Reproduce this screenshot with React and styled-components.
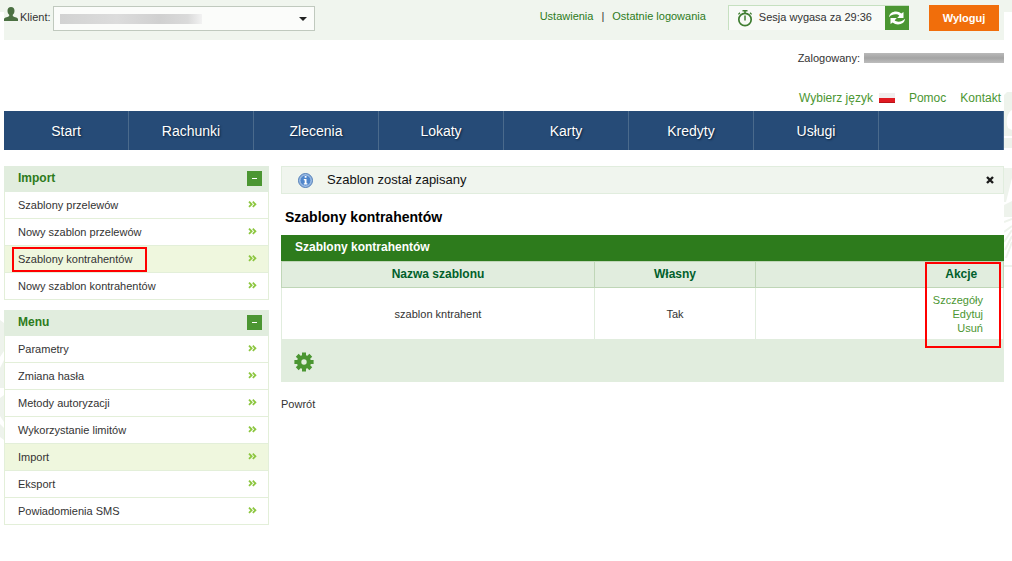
import React from 'react';
import styled, { createGlobalStyle } from 'styled-components';

const colors = {
    text: '#333333',
    link: '#4b9632',
    linkDark: '#2d7b1c',
    heading: '#00602b',
    pale: '#f0f5ee',
    panel: '#e1edde',
    line: '#e3efd9',
    lineDark: '#bfd6b7',
    active: '#eff7de',
    navy: '#264b77',
    orange: '#f16e0b',
    mark: '#ff0000',
};

const GlobalStyle = createGlobalStyle`
    *, *::before, *::after {
        box-sizing: border-box;
    }

    body {
        margin: 0;
        background: linear-gradient(${colors.pale} 12px, #ffffff 12px);
        color: ${colors.text};
        font: 11px/14px "Liberation Sans", Arial, sans-serif;
    }

    button, select {
        font: inherit;
        color: inherit;
    }

    a {
        color: inherit;
        text-decoration: none;
    }

    a:hover {
        text-decoration: underline;
    }
`;

const Page = styled.div`
    position: relative;
    padding: 0 8px 32px 4px;
`;

const Backdrop = styled.svg`
    position: absolute;
    z-index: -1;
    top: ${({ $top }) => $top}px;
    left: ${({ $side }) => ($side === 'left' ? '0' : 'auto')};
    right: ${({ $side }) => ($side === 'right' ? '0' : 'auto')};
`;

const TopBar = styled.header`
    display: flex;
    align-items: flex-start;
    height: 40px;
    padding: 5px 5px 0 0;
    background-color: ${colors.pale};
`;

const Client = styled.div`
    display: flex;
    align-items: flex-start;
    margin-right: auto;

    > svg {
        margin: 2px 2px 0 0;
    }

    label {
        margin: 5px 2px 0 0;
    }
`;

const SelectBox = styled.div`
    position: relative;
    width: 262px;
    margin-top: 1px;

    select {
        display: block;
        width: 100%;
        height: 25px;
        padding: 0 24px 0 8px;
        appearance: none;
        background-color: #fbfcfa;
        border: 1px solid #c0c9be;
        border-radius: 0;
    }

    svg {
        position: absolute;
        top: 11px;
        right: 8px;
        pointer-events: none;
    }
`;

const Redacted = styled.span`
    display: block;
    width: ${({ $width }) => $width}px;
    height: ${({ $height }) => $height}px;
    background: ${({ $dark }) =>
        $dark
            ? 'linear-gradient(#b9b9b9, #a4a4a4 50%, #bdbdbd)'
            : 'linear-gradient(90deg, #d2d2d2 0, #dcdcdc 40%, #d0d0d0 70%, #dadada 90%, #f2f2f2)'};
`;

const SelectedValue = styled(Redacted)`
    position: absolute;
    top: 8px;
    left: 7px;
    pointer-events: none;
`;

const TopLinks = styled.nav`
    display: flex;
    gap: 8px;
    margin: 4px 22px 0 0;

    a {
        color: ${colors.linkDark};
    }
`;

const Session = styled.div`
    display: flex;
    align-items: center;
    height: 25px;
    margin-right: 20px;
    padding-left: 8px;
    background-color: #f8faf7;
    border-top: 1px solid #c6e0c0;
    border-left: 1px solid #c6e0c0;

    > span {
        margin: 0 13px 2px 6px;
    }
`;

const RefreshButton = styled.button`
    display: flex;
    align-items: center;
    justify-content: center;
    width: 24px;
    height: 24px;
    padding: 0;
    background-color: ${colors.link};
    border: none;
    cursor: pointer;
`;

const LogoutButton = styled.button`
    width: 70px;
    height: 26px;
    padding: 0;
    background-color: ${colors.orange};
    border: none;
    color: #ffffff;
    font-weight: bold;
    cursor: pointer;
`;

const LoggedUser = styled.div`
    display: flex;
    align-items: center;
    justify-content: flex-end;
    gap: 4px;
    height: 35px;
`;

const LangBar = styled.nav`
    display: flex;
    align-items: center;
    justify-content: flex-end;
    height: 36px;
    padding: 10px 3px 0 0;
    color: ${colors.link};
    font-size: 12px;

    a {
        display: flex;
        align-items: center;
        gap: 6px;
        margin-left: 14px;
    }
`;

const MainNav = styled.nav`
    display: flex;
    height: 39px;
    background-color: ${colors.navy};
    border-right: 1px solid #4a6a8c;

    a {
        flex: 0 1 125px;
        border-right: 1px solid #4a6a8c;
        color: #ffffff;
        font-size: 14px;
        line-height: 40px;
        text-align: center;
        text-shadow: 1px 1px 2px #0b2039;
    }
`;

const Columns = styled.div`
    display: flex;
    align-items: flex-start;
    gap: 12px;
    margin-top: 16px;
`;

const Sidebar = styled.aside`
    flex: 0 0 265px;
`;

const Panel = styled.section`
    margin-bottom: 10px;
    border: 1px solid ${colors.line};
    border-top: none;
`;

const PanelHeader = styled.div`
    display: flex;
    align-items: center;
    justify-content: space-between;
    height: 26px;
    margin: 0 -1px;
    padding: 0 7px 1px 14px;
    background-color: ${colors.panel};

    h2 {
        margin: 0;
        padding-bottom: 1px;
        color: ${colors.linkDark};
        font-size: 12px;
    }
`;

const CollapseButton = styled.button`
    display: flex;
    align-items: center;
    justify-content: center;
    width: 15px;
    height: 15px;
    padding: 0;
    background-color: ${colors.link};
    border: none;
    cursor: pointer;

    &::before {
        content: '';
        width: 5px;
        height: 1px;
        background-color: #ffffff;
    }
`;

const MenuList = styled.ul`
    margin: 0;
    padding: 0;
    list-style: none;
`;

const MenuItem = styled.li`
    position: relative;
    background-color: ${({ $active }) => ($active ? colors.active : '#ffffff')};

    & + & {
        border-top: 1px solid ${colors.line};
    }

    a {
        display: flex;
        align-items: center;
        justify-content: space-between;
        height: 26px;
        padding: 0 11px 0 13px;
    }
`;

const ItemMark = styled.span`
    position: absolute;
    top: 1px;
    left: 7px;
    width: 135px;
    height: 25px;
    border: 2px solid ${colors.mark};
    pointer-events: none;
`;

const Content = styled.main`
    flex: 1;
    min-width: 0;
`;

const Notice = styled.div`
    display: flex;
    align-items: center;
    height: 28px;
    padding: 0 8px 0 16px;
    background-color: ${colors.pale};
    border: 1px solid ${colors.panel};
    color: #111111;
    font-size: 13px;

    p {
        flex: 1;
        margin: 0 0 0 14px;
    }
`;

const CloseButton = styled.button`
    display: flex;
    padding: 1px;
    background: none;
    border: none;
    cursor: pointer;
`;

const Title = styled.h1`
    margin: 15px 0 10px 4px;
    color: #000000;
    font-size: 14px;
    line-height: 16px;
`;

const Table = styled.table`
    width: 100%;
    table-layout: fixed;
    border-collapse: collapse;

    caption {
        height: 26px;
        padding-left: 14px;
        background-color: ${colors.linkDark};
        color: #ffffff;
        font-size: 12px;
        font-weight: bold;
        line-height: 24px;
        text-align: left;
    }

    th {
        position: relative;
        height: 26px;
        padding: 0 0 1px;
        background-color: ${colors.panel};
        border: 1px solid ${colors.lineDark};
        color: ${colors.heading};
        font-size: 12px;
    }

    tbody td {
        height: 52px;
        padding: 0;
        border: 1px solid ${colors.panel};
        text-align: center;
    }

    th:nth-child(3),
    tbody td:nth-child(3) {
        border-right: none;
    }

    th:nth-child(4),
    tbody td:nth-child(4) {
        border-left: none;
    }

    tfoot td {
        height: 42px;
        padding: 3px 0 0 12px;
        background-color: ${colors.panel};
        border: 1px solid ${colors.panel};
    }
`;

const Actions = styled.div`
    display: flex;
    flex-direction: column;
    align-items: flex-end;
    padding-right: 20px;
    color: ${colors.link};
`;

const ActionsMark = styled.span`
    position: absolute;
    z-index: 1;
    top: 0;
    right: 2px;
    width: 76px;
    height: 86px;
    border: 2px solid ${colors.mark};
    pointer-events: none;
`;

const IconButton = styled.button`
    display: block;
    padding: 0;
    background: none;
    border: none;
    cursor: pointer;

    svg {
        display: block;
    }
`;

const BackLink = styled.a`
    display: inline-block;
    margin-top: 15px;
`;

const UserIcon = () => (
    <svg width="14" height="14" viewBox="0 0 14 14" fill="#4b7042" aria-hidden="true">
        <path d="M7 0c2.300 0 3.500 1.500 3.500 3.700 0 1.800-.7 3.200-1.700 4v1.200c0 .9 5.200 1.200 5.200 3.300V14H0v-1.800c0-2.100 5.200-2.400 5.200-3.300V7.700c-1-.8-1.700-2.200-1.700-4C3.500 1.500 4.700 0 7 0z" />
    </svg>
);

const CaretIcon = () => (
    <svg width="8" height="4" viewBox="0 0 8 4" aria-hidden="true">
        <path d="M0 0h8L4 4z" fill="#222222" />
    </svg>
);

const StopwatchIcon = () => (
    <svg width="16" height="17" viewBox="0 0 16 17" fill="none" stroke="#3f7d31" aria-hidden="true">
        <circle cx="8" cy="9.500" r="6.200" strokeWidth="1.700" />
        <path d="M5.500.8h5M8 1v2.500" strokeWidth="1.600" />
        <path d="M13 2.800l1.600 1.600M3 2.800L1.400 4.400" strokeWidth="1.300" />
        <path d="M8 5.500v5" strokeWidth="1.500" />
    </svg>
);

const RefreshIcon = () => (
    <svg width="18" height="16" viewBox="0 0 18 16" fill="#ffffff" aria-hidden="true">
        <path d="M1 7.200C1.300 3.600 4.300 1.500 8 1.500c2 0 3.900.7 5.300 2L15.500 2v6H9.200l2.100-2.300C10.400 4.700 9.200 4.300 7.600 4.300 5 4.300 3 5.200 1 7.200z" />
        <path d="M17 8.800C16.700 12.400 13.700 14.500 10 14.500c-2 0-3.900-.7-5.300-2L2.500 14V8h6.300l-2.100 2.300c.9 1 2.100 1.400 3.700 1.400 2.600 0 4.600-.9 6.600-2.900z" />
    </svg>
);

const FlagIcon = () => (
    <svg width="16" height="12" viewBox="0 0 16 12" aria-hidden="true">
        <path d="M0 1h16v10H0z" fill="#f1eeee" />
        <path d="M0 6h16v5H0z" fill="#e01a22" />
        <path d="M0 10h16v1H0z" fill="#b91218" />
    </svg>
);

const InfoIcon = () => (
    <svg width="15" height="15" viewBox="0 0 15 15" aria-hidden="true">
        <circle cx="7.500" cy="7.500" r="7" fill="#8fb3df" stroke="#5580b8" />
        <circle cx="7.500" cy="7.500" r="5.500" fill="#4f86cb" stroke="#b4cdec" strokeWidth=".8" />
        <path d="M6.700 3h1.800v1.800H6.700zM5.800 6h2.700v4.200h.9v1.300H5.800v-1.300h.9V7.200h-.9z" fill="#ffffff" />
    </svg>
);

const CloseIcon = () => (
    <svg width="8" height="8" viewBox="0 0 8 8" aria-hidden="true">
        <path d="M1 1l6 6M7 1L1 7" stroke="#1c1c1c" strokeWidth="2.400" />
    </svg>
);

const ArrowsIcon = () => (
    <svg width="9" height="8" viewBox="0 0 9 8" fill="none" stroke="#8cc63f" strokeWidth="1.800" aria-hidden="true">
        <path d="M1 .7l2.600 2.600L1 5.900M4.800 .7l2.600 2.600L4.800 5.900" />
    </svg>
);

const GearIcon = () => (
    <svg width="20" height="20" viewBox="0 0 20 20" aria-hidden="true">
        <g stroke={colors.link} strokeWidth="4">
            {[0, 45, 90, 135].map((angle) => (
                <path key={angle} d="M10 .4v5M10 14.600v5" transform={`rotate(${angle} 10 10)`} />
            ))}
        </g>
        <circle cx="10" cy="10" r="4.900" fill="none" stroke={colors.link} strokeWidth="4.400" />
    </svg>
);

const navItems = ['Start', 'Rachunki', 'Zlecenia', 'Lokaty', 'Karty', 'Kredyty', 'Usługi'];

const menus = [
    {
        title: 'Import',
        items: [
            { label: 'Szablony przelewów' },
            { label: 'Nowy szablon przelewów' },
            { label: 'Szablony kontrahentów', active: true, marked: true },
            { label: 'Nowy szablon kontrahentów' },
        ],
    },
    {
        title: 'Menu',
        items: [
            { label: 'Parametry' },
            { label: 'Zmiana hasła' },
            { label: 'Metody autoryzacji' },
            { label: 'Wykorzystanie limitów' },
            { label: 'Import', active: true },
            { label: 'Eksport' },
            { label: 'Powiadomienia SMS' },
        ],
    },
];

const SideMenu = ({ title, items }) => (
    <Panel>
        <PanelHeader>
            <h2>{title}</h2>
            <CollapseButton type="button" aria-label={`Zwiń ${title}`} />
        </PanelHeader>
        <MenuList>
            {items.map(({ label, active, marked }) => (
                <MenuItem key={label} $active={active}>
                    <a href="#">
                        {label}
                        <ArrowsIcon />
                    </a>
                    {marked && <ItemMark />}
                </MenuItem>
            ))}
        </MenuList>
    </Panel>
);

const App = () => (
    <Page>
        <GlobalStyle />

        <Backdrop $side="right" $top={92} width="8" height="176" viewBox="0 0 8 176" aria-hidden="true">
            <path d="M3 0h5v18C4 20 1 28 4 36l4 2v6H0V3z" fill="#eef3ec" />
            <path d="M0 46h8v10H0zM0 76h8v10L2 110H0zM0 113l8-4v16H0z" fill="#eef3ec" />
            <path d="M0 130l8-3M0 140l8-6M0 150l8-12M1 158l7-14M2 166l6-16M0 174h8" stroke="#eef3ec" strokeWidth="2" />
        </Backdrop>
        <Backdrop $side="left" $top={318} width="4" height="126" viewBox="0 0 4 126" aria-hidden="true">
            <path d="M0 2l4 3v28l-4 6zM0 50l4-8v28H0zM0 80l4-3v27l-4-6zM0 106l4 4v12l-4-3z" fill="#eef3ec" />
        </Backdrop>

        <TopBar>
            <Client>
                <UserIcon />
                <label htmlFor="client">Klient:</label>
                <SelectBox>
                    <select id="client">
                        <option aria-label="Klient" />
                    </select>
                    <SelectedValue $width={142} $height={10} />
                    <CaretIcon />
                </SelectBox>
            </Client>
            <TopLinks>
                <a href="#">Ustawienia</a>
                <span>|</span>
                <a href="#">Ostatnie logowania</a>
            </TopLinks>
            <Session>
                <StopwatchIcon />
                <span>Sesja wygasa za 29:36</span>
                <RefreshButton type="button" aria-label="Odśwież sesję">
                    <RefreshIcon />
                </RefreshButton>
            </Session>
            <LogoutButton type="button">Wyloguj</LogoutButton>
        </TopBar>

        <LoggedUser>
            Zalogowany:
            <Redacted $width={140} $height={10} $dark />
        </LoggedUser>

        <LangBar>
            <a href="#">
                Wybierz język
                <FlagIcon />
            </a>
            <a href="#">Pomoc</a>
            <a href="#">Kontakt</a>
        </LangBar>

        <MainNav>
            {navItems.map((item) => (
                <a key={item} href="#">
                    {item}
                </a>
            ))}
        </MainNav>

        <Columns>
            <Sidebar>
                {menus.map((menu) => (
                    <SideMenu key={menu.title} {...menu} />
                ))}
            </Sidebar>

            <Content>
                <Notice role="status">
                    <InfoIcon />
                    <p>Szablon został zapisany</p>
                    <CloseButton type="button" aria-label="Zamknij">
                        <CloseIcon />
                    </CloseButton>
                </Notice>

                <Title>Szablony kontrahentów</Title>

                <Table>
                    <caption>Szablony kontrahentów</caption>
                    <colgroup>
                        <col />
                        <col width="161" />
                        <col width="164" />
                        <col width="84" />
                    </colgroup>
                    <thead>
                        <tr>
                            <th scope="col">Nazwa szablonu</th>
                            <th scope="col">Własny</th>
                            <th scope="col" aria-label="Opis" />
                            <th scope="col">
                                Akcje
                                <ActionsMark />
                            </th>
                        </tr>
                    </thead>
                    <tbody>
                        <tr>
                            <td>szablon kntrahent</td>
                            <td>Tak</td>
                            <td />
                            <td>
                                <Actions>
                                    <a href="#">Szczegóły</a>
                                    <a href="#">Edytuj</a>
                                    <a href="#">Usuń</a>
                                </Actions>
                            </td>
                        </tr>
                    </tbody>
                    <tfoot>
                        <tr>
                            <td colSpan="4">
                                <IconButton type="button" aria-label="Opcje">
                                    <GearIcon />
                                </IconButton>
                            </td>
                        </tr>
                    </tfoot>
                </Table>

                <BackLink href="#">Powrót</BackLink>
            </Content>
        </Columns>
    </Page>
);

export default App;
